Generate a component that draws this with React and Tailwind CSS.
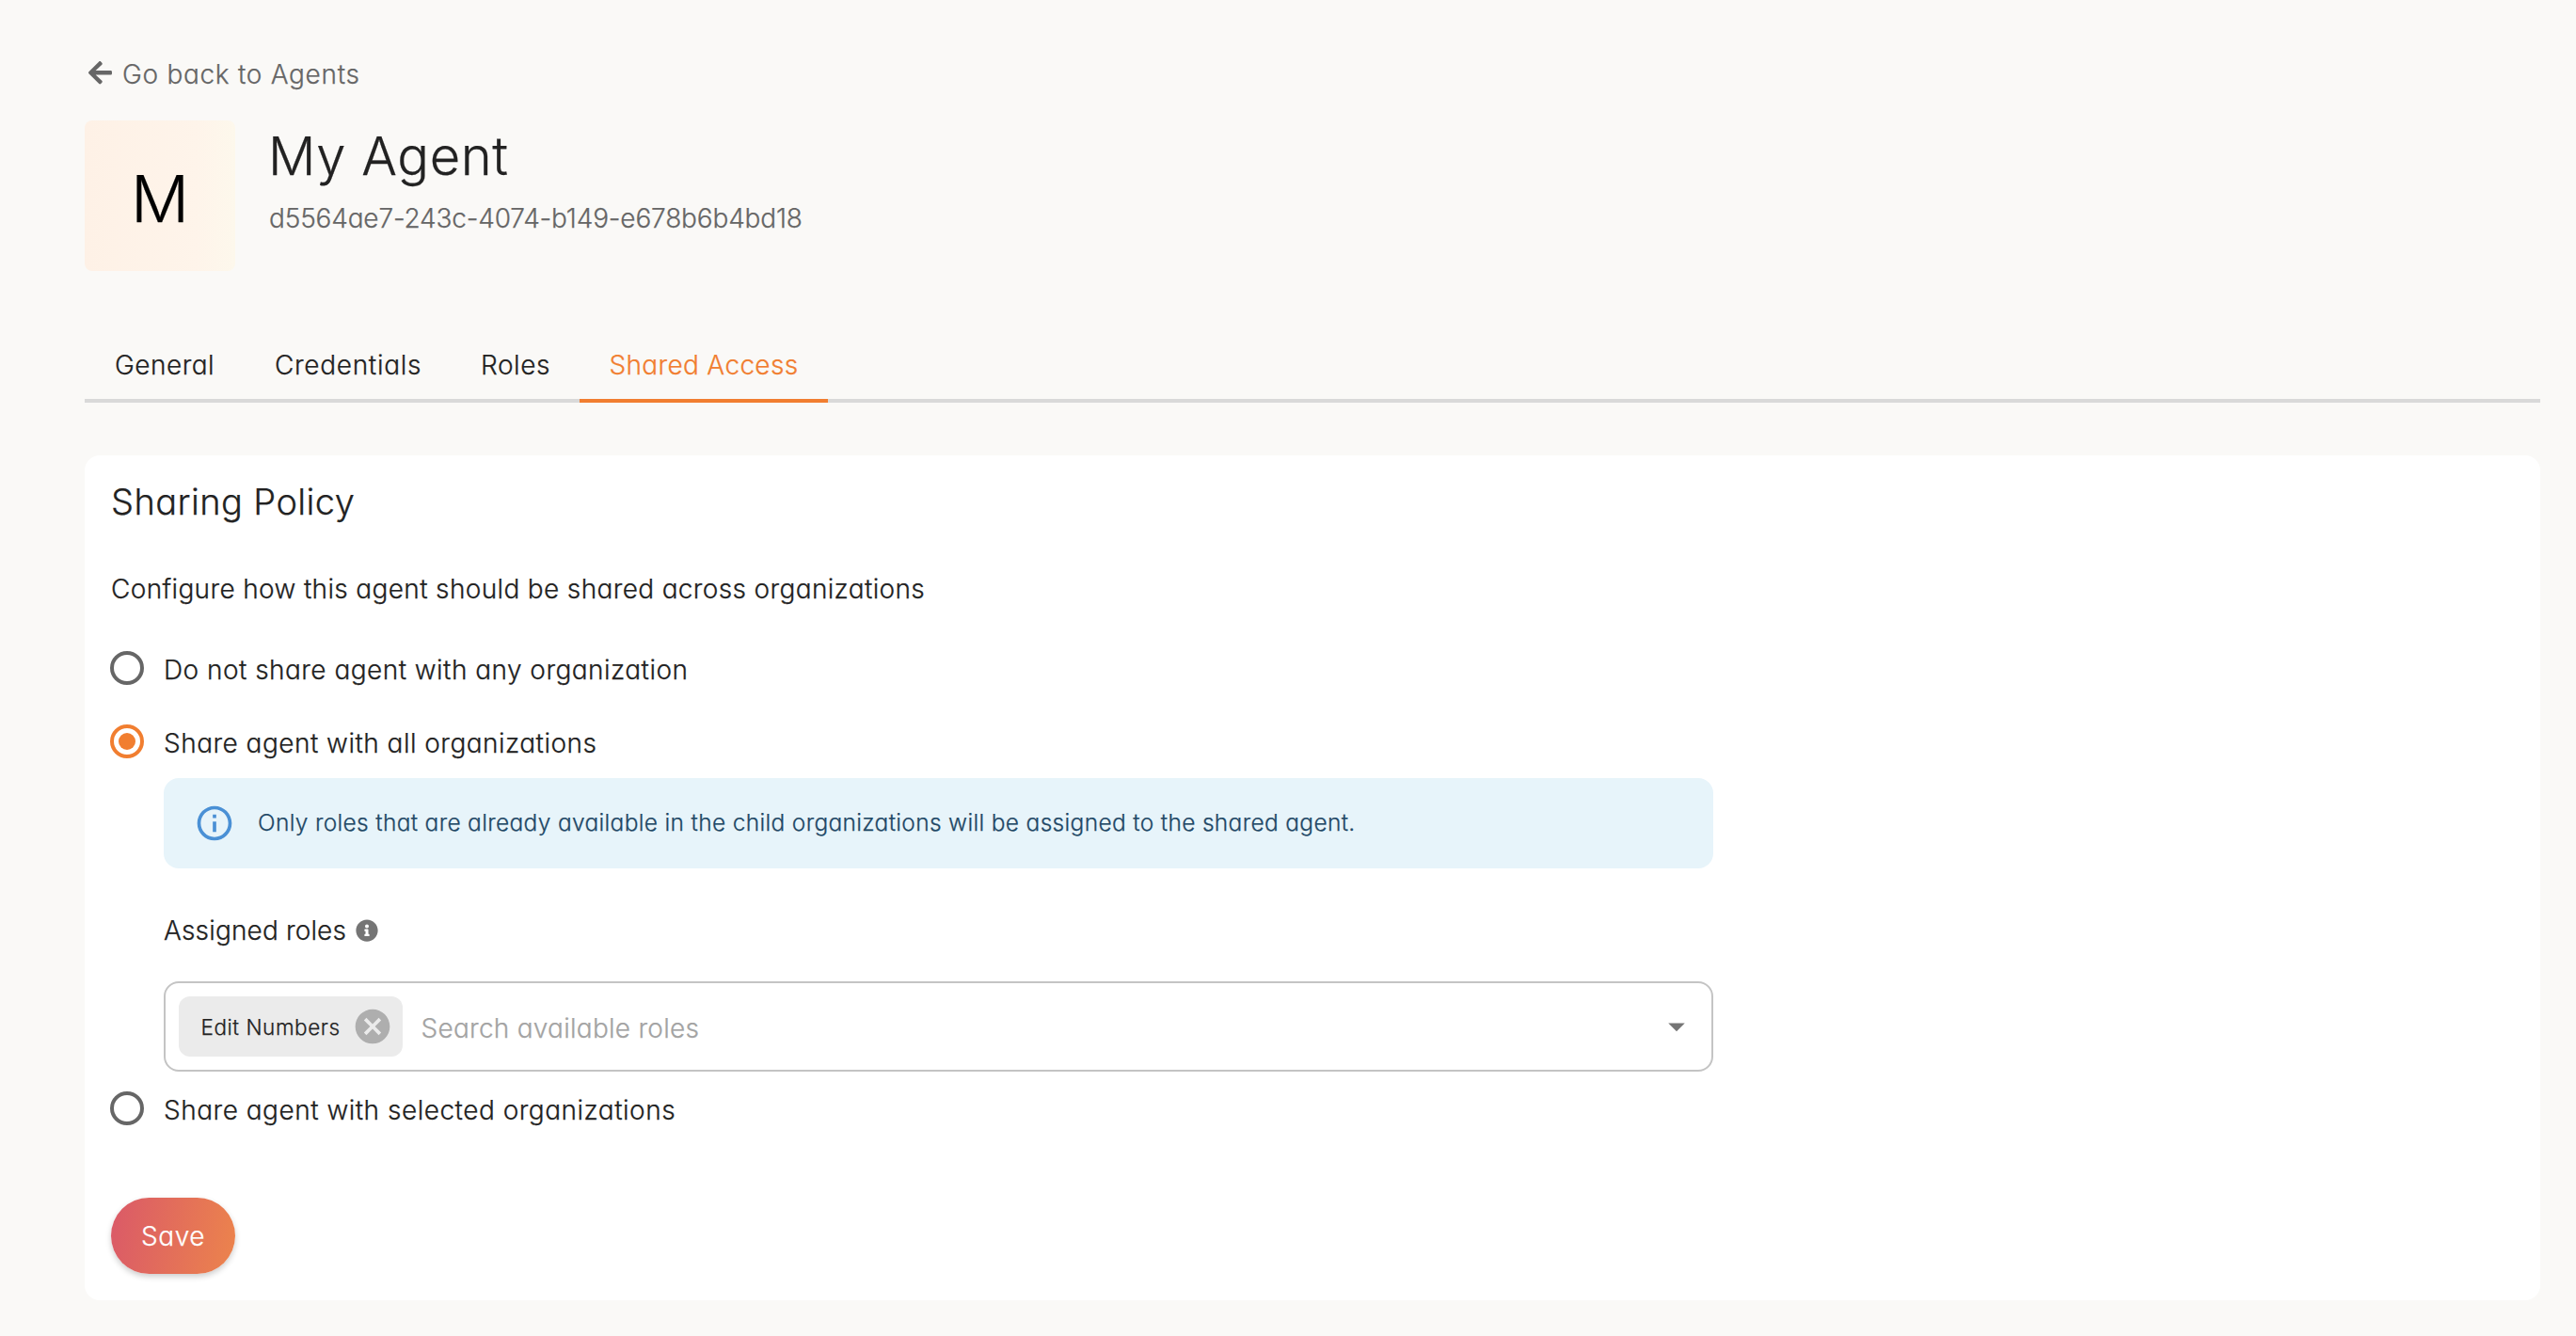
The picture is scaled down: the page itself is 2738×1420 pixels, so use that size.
import { FaArrowLeft, FaInfoCircle } from "react-icons/fa";
import { MdInfoOutline, MdCancel, MdArrowDropDown } from "react-icons/md";

const tabs = [
  { label: "General", className: "w-[170px] text-[#222222] tracking-[0.5px] border-transparent" },
  { label: "Credentials", className: "w-[220px] text-[#222222] tracking-[0.7px] border-transparent" },
  { label: "Roles", className: "w-[136px] text-[#222222] tracking-[0.6px] border-transparent" },
  { label: "Shared Access", className: "w-[264px] text-[#f17e30] tracking-[0.32px] border-[#f17e30]" },
];

function RadioOption({ checked = false, children, className }) {
  return (
    <label className="flex h-[78px] items-center">
      <span
        className={
          checked
            ? "-ml-px flex size-9 shrink-0 items-center justify-center rounded-full border-4 border-[#f17e30]"
            : "-ml-px flex size-9 shrink-0 items-center justify-center rounded-full border-4 border-[#666666]"
        }
      >
        {checked && <span className="size-[18px] rounded-full bg-[#f17e30]" />}
      </span>
      <span className={`ml-[21px] pt-[3px] whitespace-nowrap ${className}`}>{children}</span>
    </label>
  );
}

function Header() {
  return (
    <header>
      <a className="flex h-10 items-center pl-1 text-[#666666]">
        <FaArrowLeft className="mb-[2px] h-[28.5px] w-[25px]" />
        <span className="ml-[11px] pt-px tracking-[0.7px]">Go back to Agents</span>
      </a>
      <div className="mt-[30px] flex">
        <div className="flex size-40 items-center justify-center rounded-lg bg-linear-to-r from-[#fef1e6] via-[#fef4ea] via-75% to-[#fdf8ec] pt-[5px] text-[69px] text-black">
          M
        </div>
        <div className="ml-[36px]">
          <h1 className="-ml-px pt-px text-[56px] leading-[75px] tracking-[0.6px]">My Agent</h1>
          <p className="mt-[8px] leading-10 tracking-[-0.17px] text-[#666666]">
            d5564ae7-243c-4074-b149-e678b6b4bd18
          </p>
        </div>
      </div>
    </header>
  );
}

function Tabs() {
  return (
    <nav className="mt-[62px] flex border-b-4 border-[#d9d9d9]">
      {tabs.map((tab) => (
        <a
          key={tab.label}
          className={`-mb-1 flex h-[78px] items-center justify-center border-b-4 pt-px whitespace-nowrap ${tab.className}`}
        >
          {tab.label}
        </a>
      ))}
    </nav>
  );
}

function RoleSelect() {
  return (
    <div className="mt-[35px] flex h-24 items-center rounded-2xl border-2 border-[#c4c4c4] bg-white pr-4 pl-[14px]">
      <div className="flex h-16 w-[238px] items-center justify-between rounded-[12px] bg-[#ebebeb] pr-[10px] pl-[23.5px]">
        <span className="pt-[2px] text-[22.5px] tracking-[0.55px] whitespace-nowrap">Edit Numbers</span>
        <MdCancel className="size-11 text-[#aeaeae]" />
      </div>
      <span className="ml-[19.5px] flex-1 pt-[3px] tracking-[0.26px] text-[#a3a3a3]">
        Search available roles
      </span>
      <MdArrowDropDown className="size-[42px] text-[#757575]" />
    </div>
  );
}

export default function App() {
  return (
    <main className="min-h-screen bg-[#faf9f7] pt-[58px] pr-[38px] pb-[38px] pl-[90px] font-['Inter',sans-serif] text-[28px] leading-10 font-light text-[#222222] [-webkit-text-stroke:0.25px] [font-feature-settings:'cv11']">
      <Header />
      <Tabs />
      <section className="mt-14 rounded-2xl bg-white px-7 pt-6 pb-7">
        <h2 className="text-[38px] leading-[50px] tracking-[0.4px]">Sharing Policy</h2>
        <p className="mt-12 tracking-[0.35px]">
          Configure how this agent should be shared across organizations
        </p>
        <div className="mt-[25px]">
          <RadioOption className="tracking-[0.46px]">Do not share agent with any organization</RadioOption>
          <RadioOption checked className="tracking-[0.475px]">
            Share agent with all organizations
          </RadioOption>
          <div className="ml-14 w-[1647px]">
            <div className="flex h-24 items-center rounded-2xl bg-[#e7f4fa] pl-8">
              <MdInfoOutline className="size-11 text-[#4a90d5]" />
              <span className="ml-[24px] pb-[3px] text-[24.5px] tracking-[0.325px] text-[#1f4866]">
                Only roles that are already available in the child organizations will be assigned to the shared agent.
              </span>
            </div>
            <div className="mt-[45px] flex h-10 items-center">
              <span className="pt-px tracking-[0.149px]">Assigned roles</span>
              <FaInfoCircle className="mt-px ml-[10px] size-6 text-[#757575]" />
            </div>
            <RoleSelect />
          </div>
          <RadioOption className="tracking-[0.5px]">Share agent with selected organizations</RadioOption>
        </div>
        <button className="mt-14 flex h-[81px] w-[132px] items-center justify-center rounded-full bg-linear-[100deg] from-[#da5968] to-[#ec844c] pt-px tracking-[0.5px] text-white shadow-[0_3px_6px_rgba(0,0,0,0.2)]">
          Save
        </button>
      </section>
    </main>
  );
}
